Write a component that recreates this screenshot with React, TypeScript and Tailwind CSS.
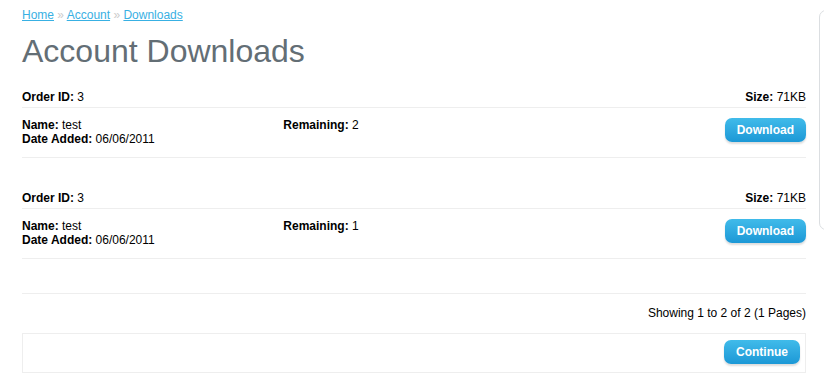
const downloads = [
  { id: 3, size: '71KB', name: 'test', date: '06/06/2011', remaining: 2 },
  { id: 3, size: '71KB', name: 'test', date: '06/06/2011', remaining: 1 },
];

function BlueButton({ label }: { label: string }) {
  return (
    <a
      href="#"
      className="inline-block rounded-[7px] bg-gradient-to-b from-[#40bbea] to-[#1b98d6] px-[12px] py-[6px] text-[12px] font-bold leading-[12px] text-white no-underline shadow-[0_2px_2px_#dddddd]"
    >
      {label}
    </a>
  );
}

export default function App() {
  return (
    <div
      className="flex w-full overflow-hidden bg-white text-[12px] text-black"
      style={{ fontFamily: '"Liberation Sans", Arial, Helvetica, sans-serif' }}
    >
      <div className="w-[806px] shrink-0 pl-[22px] pt-[8px]">
        {/* breadcrumb */}
        <div className="mb-[10px] h-[15px] leading-[15px] text-[#cccccc]">
          <a href="#" className="text-[#38b0e3] underline">Home</a>
          {' » '}
          <a href="#" className="text-[#38b0e3] underline">Account</a>
          {' » '}
          <a href="#" className="text-[#38b0e3] underline">Downloads</a>
        </div>

        <h1 className="mb-[20px] text-[32px] font-normal leading-[37px] text-[#636e75]">Account Downloads</h1>

        {downloads.map((d, i) => (
          <div key={i} className={i === downloads.length - 1 ? 'mb-[34px]' : 'mb-[33px]'}>
            <div className="mb-[3px] flex justify-between leading-[14px]">
              <div>
                <b>Order ID:</b> {d.id}
              </div>
              <div>
                <b>Size:</b> {d.size}
              </div>
            </div>
            <div className="grid grid-cols-3 border-y border-[#eeeeee] pb-[11px] pt-[10px] leading-[14px]">
              <div>
                <div>
                  <b>Name:</b> {d.name}
                </div>
                <div>
                  <b>Date Added:</b> {d.date}
                </div>
              </div>
              <div>
                <b>Remaining:</b> {d.remaining}
              </div>
              <div className="text-right">
                <BlueButton label="Download" />
              </div>
            </div>
          </div>
        ))}

        {/* pagination */}
        <div className="mb-[13px] border-t border-[#eeeeee] pt-[12px] text-right leading-[14px]">
          Showing 1 to 2 of 2 (1 Pages)
        </div>

        <div className="flex justify-end border border-[#eeeeee] pb-[8px] pl-[6px] pr-[5px] pt-[6px]">
          <BlueButton label="Continue" />
        </div>
      </div>

      {/* right column box, cut off by the window */}
      <aside className="ml-[13px] mt-[10px] h-[220px] w-[200px] shrink-0 rounded-[7px] border border-[#dbdee1]" />
    </div>
  );
}
